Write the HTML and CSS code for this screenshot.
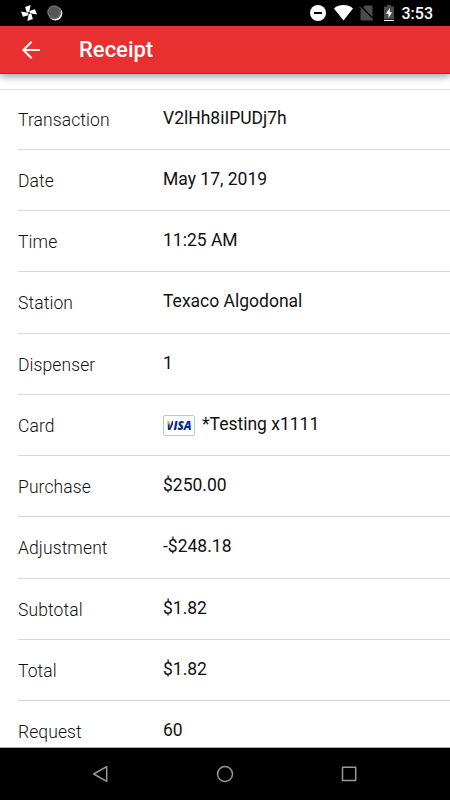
FILE: index.html
```html
<!DOCTYPE html>
<html lang="en">
<head>
  <meta charset="UTF-8" />
  <meta name="viewport" content="width=device-width, initial-scale=1" />
  <title>Receipt</title>
  <link rel="stylesheet" href="styles.css">
</head>
<body>
  <div class="status-bar">
    <div class="notifications">
      <svg width="16" height="16" viewBox="0 0 16 16" fill="#fff">
        <path d="M8 8.500L9.600 0L4.200 2L5.400 6.500z" />
        <path d="M7.500 8L16 9.600L14 4.200L9.500 5.400z" />
        <path d="M8 7.500L6.400 16L11.800 14L10.600 9.500z" />
        <path d="M8.500 8L0 6.400L2 11.800L6.500 10.600z" />
        <circle cx="8" cy="8" r="1" fill="#000" />
      </svg>
      <svg width="16" height="16" viewBox="0 0 16 16">
        <circle cx="8.4" cy="8.5" r="6.9" fill="#fff" />
        <circle cx="7.2" cy="7.2" r="7" fill="#555" />
        <circle cx="7.2" cy="7.2" r="6" fill="none" stroke="#858585" stroke-width="1.1" stroke-dasharray="1 1" />
      </svg>
    </div>
    <div class="system">
      <svg class="dnd" width="16" height="16" viewBox="0 0 16 16">
        <circle cx="8" cy="8" r="8" fill="#fff" />
        <path d="M4 8h8" stroke="#000" stroke-width="2" />
      </svg>
      <svg class="wifi" width="19" height="16" viewBox="0 0 19 16">
        <path d="M0 3.400C5.400-1 13.600-1 19 3.400L9.500 15.500z" fill="#fff" />
      </svg>
      <svg class="sim" width="15" height="16" viewBox="0 0 15 16">
        <path d="M6 .5H12.300q1.200 0 1.200 1.200V14q0 1.500-1.200 1.500H2.700Q1.500 15.500 1.500 14V5z" fill="#4d4d4d" />
        <path d="M1.500 .8L15.500 15" stroke="#000" stroke-width="1.400" />
        <path d="M.5 1.800L14 15.300" stroke="#4d4d4d" stroke-width="1.200" />
      </svg>
      <svg class="battery" width="10" height="16" viewBox="0 0 10 16">
        <path d="M3 0h4v1.500h3V16H0V1.500h3z" fill="#4d4d4d" />
        <path d="M0 14.800h10v1.200H0z" fill="#fff" />
        <path d="M0 14h10v.8H0z" fill="#000" />
        <path d="M5.800 3L2 8.700h2.500V13L8 7.300H5.800z" fill="#fff" />
      </svg>
      <span class="clock">3:53</span>
    </div>
  </div>

  <header class="app-bar">
    <svg width="18" height="18" viewBox="0 0 18 18" fill="none" stroke="#fff" stroke-width="2">
      <path d="M9.600 .8L1.400 9l8.200 8.200M1.400 9H18" />
    </svg>
    <h1>Receipt</h1>
  </header>

  <main class="receipt">
    <div class="row">
      <span class="label">Transaction</span>
      <span class="value">V2lHh8iIPUDj7h</span>
    </div>
    <div class="row">
      <span class="label">Date</span>
      <span class="value">May 17, 2019</span>
    </div>
    <div class="row">
      <span class="label">Time</span>
      <span class="value">11:25 AM</span>
    </div>
    <div class="row">
      <span class="label">Station</span>
      <span class="value">Texaco Algodonal</span>
    </div>
    <div class="row">
      <span class="label">Dispenser</span>
      <span class="value">1</span>
    </div>
    <div class="row">
      <span class="label">Card</span>
      <span class="value card"><span class="visa"><span class="visa-v">V</span>ISA</span>*Testing x1111</span>
    </div>
    <div class="row">
      <span class="label">Purchase</span>
      <span class="value">$250.00</span>
    </div>
    <div class="row">
      <span class="label">Adjustment</span>
      <span class="value">-$248.18</span>
    </div>
    <div class="row">
      <span class="label">Subtotal</span>
      <span class="value">$1.82</span>
    </div>
    <div class="row">
      <span class="label">Total</span>
      <span class="value">$1.82</span>
    </div>
    <div class="row">
      <span class="label">Request</span>
      <span class="value">60</span>
    </div>
  </main>

  <nav class="nav-bar">
    <svg width="18" height="18" viewBox="0 0 18 18">
      <path d="M14.700 1.700v14.600L1.700 9z" />
    </svg>
    <svg width="18" height="18" viewBox="0 0 18 18">
      <circle cx="9" cy="9" r="7.500" />
    </svg>
    <svg width="18" height="18" viewBox="0 0 18 18">
      <rect x="2.500" y="2.300" width="13.200" height="13.200" />
    </svg>
  </nav>
</body>
</html>
```
FILE: styles.css
```css
* {
  box-sizing: border-box;
}

body {
  font-family: Roboto, sans-serif;
  background-color: #fff;
  color: #111;
  margin: 0;
  height: 100vh;
  overflow: hidden;
  display: flex;
  flex-direction: column;
}

.status-bar {
  flex: none;
  height: 26px;
  background-color: #000;
  display: flex;
  justify-content: space-between;
  align-items: center;
  padding: 0 17px 0 21px;
}

.notifications,
.system {
  display: flex;
  align-items: center;
}

.notifications {
  gap: 10px;
}

.wifi {
  margin-left: 8px;
}

.sim {
  margin-left: 6px;
}

.battery {
  margin-left: 10px;
}

.clock {
  margin-left: 8px;
  padding-top: 2px;
  color: #fff;
  font-size: 16px;
  font-weight: 500;
  line-height: 24px;
}

/* App bar */
.app-bar {
  flex: none;
  position: relative;
  z-index: 1;
  height: 48px;
  background-color: #e83030;
  border-bottom: 1px solid #e01010;
  box-shadow: 0 3px 7px rgba(0,0,0,0.35);
  display: flex;
  align-items: center;
  padding-left: 22px;
}

.app-bar h1 {
  margin: 0 0 0 39px;
  color: #fff;
  font-size: 22px;
  font-weight: 500;
}

/* Receipt rows */
.receipt {
  flex: 1;
  min-height: 0;
  overflow: hidden;
  margin-top: 15px;
  border-top: 1px solid #e2e2e2;
}

.row {
  height: 61.22px;
  margin-left: 18px;
  border-bottom: 1px solid #d6d6d6;
  display: flex;
  font-size: 17.5px;
  line-height: 24px;
}

.row:first-child {
  height: 60px;
}

.row:first-child .label {
  padding-top: 18px;
}

.row:first-child .value {
  padding-top: 16px;
}

.label {
  width: 145px;
  padding-top: 19px;
  color: #111;
  font-weight: 300;
  letter-spacing: 0.1px;
}

.value {
  padding-top: 17px;
}

.card {
  display: flex;
}

.visa {
  width: 32px;
  height: 21px;
  margin: 3px 7px 0 0;
  border: 1px solid #b9c6d8;
  border-radius: 2px;
  color: #0a2a90;
  font-family: "Open Sans", sans-serif;
  font-size: 11.5px;
  font-style: italic;
  font-weight: 800;
  line-height: 20px;
  text-align: center;
}

.visa-v {
  background: linear-gradient(125deg, #f0a020 38%, #0a2a90 42%);
  background-clip: text;
  -webkit-background-clip: text;
  color: transparent;
}

/* Navigation bar */
.nav-bar {
  flex: none;
  height: 53px;
  background-color: #000;
  border-top: 1px solid #aaa;
  display: flex;
  justify-content: space-between;
  align-items: center;
  padding: 0 92px;
}

.nav-bar svg {
  fill: none;
  stroke: #999;
  stroke-width: 1.5;
  stroke-linejoin: round;
}
```
